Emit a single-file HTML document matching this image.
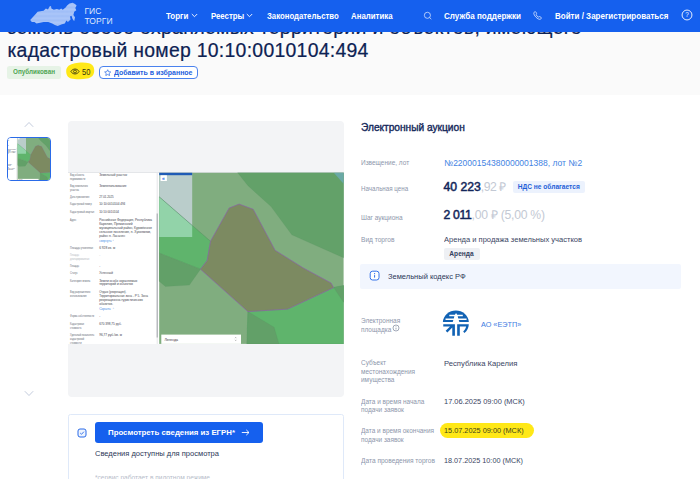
<!DOCTYPE html>
<html lang="ru"><head><meta charset="utf-8">
<title>ГИС Торги</title>
<style>
*{box-sizing:border-box;margin:0;padding:0}
html,body{width:700px;height:479px;overflow:hidden;background:#fff}
body{position:relative;font-family:"Liberation Sans",sans-serif;color:#0f2556}
.abs{position:absolute;white-space:nowrap}
#hdr{position:absolute;left:0;top:0;width:700px;height:31.5px;background:#1560ee}
.nav{position:absolute;top:11.3px;font-size:8.4px;font-weight:bold;color:#fff;line-height:10px;white-space:nowrap}
#band{position:absolute;left:0;top:31px;width:700px;height:64.2px;background:#fafafa}
.t{position:absolute;left:7.4px;font-size:19.4px;line-height:22px;color:#0d2253;white-space:nowrap;-webkit-text-stroke:.22px #0d2253}
.lbl{position:absolute;left:360.8px;font-size:7px;line-height:8.3px;color:#8d96ab;white-space:nowrap}
.val{position:absolute;left:443px;font-size:8.1px;line-height:10px;color:#3a4563;white-space:nowrap}
</style></head><body>
<div id="band"></div>
<div class="t" id="t1" style="top:16.3px;letter-spacing:.32px">земель особо охраняемых территорий и объектов, имеющего</div>
<div class="t" id="t2" style="top:38.6px;letter-spacing:.285px">кадастровый номер 10:10:0010104:494</div>
<div id="hdr"></div>
<!-- header -->
<svg class="abs" style="left:29px;top:2px" width="50" height="26" viewBox="0 0 50 26">
<defs><pattern id="dots" width="1.3" height="1.3" patternUnits="userSpaceOnUse"><rect width="1.3" height="1.3" fill="#6f9cf3"/><circle cx=".65" cy=".65" r=".55" fill="#dbe7fd"/></pattern></defs>
<path fill="url(#dots)" d="M1.2 18.1 L4.4 14.5 L6.7 12.1 L8.6 9.8 L11.4 9.3 L14.6 8.7 L16.9 6.6 L19.0 7.4 L20.5 4.6 L22.0 4.0 L22.4 6.6 L24.8 7.7 L27.9 7.1 L30.3 7.7 L32.2 6.6 L33.7 7.7 L36.6 5.5 L38.1 3.5 L40.5 1.5 L43.6 0.8 L46.0 1.9 L47.6 3.5 L46.3 5.9 L47.3 8.2 L45.2 9.8 L44.4 12.9 L46.0 15.3 L45.2 19.2 L43.6 16.9 L42.5 13.7 L41.0 14.5 L41.6 17.6 L38.9 20.0 L37.4 18.4 L35.8 21.6 L32.2 22.4 L28.7 23.9 L25.9 23.1 L23.2 21.6 L19.3 20.0 L14.6 20.0 L11.1 20.8 L7.5 21.6 L5.5 20.0 L2.8 20.0 Z"/>
</svg>
<div class="abs" id="g1" style="left:84.4px;top:7.3px;font-size:8.5px;line-height:9.3px;color:#dfe9fd;letter-spacing:.1px"><span id="g1a">ГИС</span><br><span id="g1b">ТОРГИ</span></div>
<div class="nav" id="n1" style="left:166px;transform-origin:0 0;transform:scaleX(0.9502)">Торги</div>
<svg class="abs" style="left:190.5px;top:12.8px" width="7" height="5" viewBox="0 0 7 5"><path d="M.8 1 L3.5 3.7 L6.2 1" fill="none" stroke="#fff" stroke-width=".9"/></svg>
<div class="nav" id="n2" style="left:210.5px;transform-origin:0 0;transform:scaleX(0.9291)">Реестры</div>
<svg class="abs" style="left:246px;top:12.8px" width="7" height="5" viewBox="0 0 7 5"><path d="M.8 1 L3.5 3.7 L6.2 1" fill="none" stroke="#fff" stroke-width=".9"/></svg>
<div class="nav" id="n3" style="left:266.6px;transform-origin:0 0;transform:scaleX(0.9278)">Законодательство</div>
<div class="nav" id="n4" style="left:351px;transform-origin:0 0;transform:scaleX(0.9381)">Аналитика</div>
<svg class="abs" style="left:423px;top:11px" width="10" height="10" viewBox="0 0 10 10"><circle cx="4.4" cy="4.3" r="3.05" fill="none" stroke="#d3e1fc" stroke-width=".8"/><path d="M6.6 6.5 L8.3 8.2" stroke="#d3e1fc" stroke-width=".8"/></svg>
<div class="nav" id="n5" style="left:444px;transform-origin:0 0;transform:scaleX(0.9653)">Служба поддержки</div>
<svg class="abs" style="left:533px;top:11px" width="9" height="9" viewBox="0 0 9 9"><path d="M1.2 1.2 C1.8.5 2.6.5 3 1.2 L3.6 2.5 C3.8 3 3.5 3.4 3.1 3.7 C3.6 4.8 4.4 5.6 5.4 6.1 C5.7 5.6 6.2 5.4 6.7 5.6 L7.9 6.2 C8.5 6.6 8.5 7.3 7.9 7.9 C7 8.7 5.6 8.3 4 7.1 C2.5 5.9 1.2 4.2 .9 2.9 C.7 2.2 .8 1.6 1.2 1.2 Z" fill="none" stroke="#dfe9fd" stroke-width=".8"/></svg>
<div class="nav" id="n6" style="left:554.6px;transform-origin:0 0;transform:scaleX(0.9561)">Войти / Зарегистрироваться</div>
<svg class="abs" style="left:681.4px;top:8.6px" width="12" height="12" viewBox="0 0 12 12"><circle cx="6" cy="6" r="4.95" fill="none" stroke="#e6eefe" stroke-width="1"/><text x="6" y="8.2" font-size="6.4" fill="#fff" text-anchor="middle" font-family="Liberation Sans, sans-serif">?</text></svg>

<!-- badges -->
<div class="abs" style="left:6.8px;top:66px;width:54.7px;height:12.5px;background:#e6f3e6;border-radius:2.5px"></div>
<div class="abs" id="pub" style="left:13px;top:67.3px;font-size:6.7px;font-weight:bold;color:#4fa554;line-height:10px;transform-origin:0 0;transform:scaleX(0.9455)">Опубликован</div>
<svg class="abs" style="left:65px;top:61px" width="32" height="20" viewBox="0 0 32 20"><path d="M1.2 10.5 C1 5.5 5 3 10 2.2 C14 1.4 20 1.2 24 2.2 C28 3.2 29.4 6.5 29.2 10 C29 14 27 16.6 22 17.6 C17 18.4 10 18.4 6 17.4 C2.5 16.4 1.3 13.8 1.2 10.5 Z" fill="#ffe817"/>
<path d="M5.9 10.5 C7.8 7.2 12.2 7.2 14.1 10.5 C12.2 13.8 7.8 13.8 5.9 10.5 Z" fill="none" stroke="#34340f" stroke-width=".85"/><circle cx="10" cy="10.5" r="1.45" fill="none" stroke="#34340f" stroke-width=".8"/></svg>
<div class="abs" id="n50" style="left:81.8px;top:67.4px;font-size:8.4px;line-height:10px;color:#34340f;transform-origin:0 0;transform:scaleX(0.9005)">50</div>
<div class="abs" style="left:98.9px;top:65.6px;width:99px;height:13.2px;border:1px solid #4a82ee;border-radius:4px;background:#fff"></div>
<svg class="abs" style="left:103.7px;top:68.6px" width="7.4" height="7.4" viewBox="0 0 7 7"><path d="M3.5 .7 L4.4 2.6 L6.4 2.8 L4.9 4.2 L5.3 6.2 L3.5 5.2 L1.7 6.2 L2.1 4.2 L.6 2.8 L2.6 2.6 Z" fill="none" stroke="#2f6ee6" stroke-width=".7" stroke-linejoin="round"/></svg>
<div class="abs" id="fav" style="left:114.2px;top:67.6px;font-size:7.6px;font-weight:bold;line-height:10px;color:#2460dc;transform-origin:0 0;transform:scaleX(0.9180)">Добавить в избранное</div>

<!-- gallery -->
<svg class="abs" style="left:24px;top:121px" width="10" height="7" viewBox="0 0 10 7"><path d="M.8 5.8 L5 1.5 L9.2 5.8" fill="none" stroke="#bcc5d8" stroke-width=".9"/></svg>
<svg class="abs" style="left:24px;top:390px" width="10" height="7" viewBox="0 0 10 7"><path d="M.8 1.2 L5 5.5 L9.2 1.2" fill="none" stroke="#bcc5d8" stroke-width=".9"/></svg>
<div class="abs" id="thumb" style="left:6.7px;top:136.7px;width:44px;height:44.3px;border:1px solid #2a6be8;border-radius:4px;overflow:hidden;background:#fff">
<svg style="position:absolute;left:-13.9px;top:-1px" width="71.1" height="44.3" viewBox="68 172 276 172" preserveAspectRatio="none"><use href="#shot"/></svg>
</div>
<div class="abs" style="left:67.5px;top:120.5px;width:276.5px;height:276px;background:#f3f4f6;border-radius:4px"></div>
<svg class="abs" style="left:68px;top:172px" width="276" height="172" viewBox="68 172 276 172">
<g id="shot">
<rect x="68" y="172" width="276" height="172" fill="#fff"/>
<g id="map">
<rect x="159.2" y="172.6" width="184.4" height="171.3" fill="#80ad7f"/>
<polygon points="237.5,172.6 248,185.7 271,206.6 291.8,234.8 343.6,257.8 343.6,172.6" fill="#63a169" stroke="#4f8a5c" stroke-width=".25" stroke-opacity=".6"/>
<polygon points="333.6,172.6 343.6,183.7 343.6,172.6" fill="#6aa9a6"/>
<polygon points="159.2,196.8 210.3,241.1 207.2,260.4 200.5,269.2 159.2,253.1" fill="#5fb46c" stroke="#4f8a5c" stroke-width=".25" stroke-opacity=".6"/>
<polygon points="159.2,253.1 200.5,269.2 189.4,285.1 165.4,286.5 159.2,281.3" fill="#62a068" stroke="#4f8a5c" stroke-width=".25" stroke-opacity=".6"/>
<polygon points="247.9,311.6 287.7,309.1 333.6,287.6 343.6,285.5 343.6,343.9 246.9,343.9" fill="#5fb46c" stroke="#4f8a5c" stroke-width=".25" stroke-opacity=".6"/>
<polygon points="247.9,311.6 274.1,327.2 278.9,343.9 246.9,343.9" fill="#62a068" stroke="#4f8a5c" stroke-width=".25" stroke-opacity=".6"/>
<polygon points="333.6,287.3 343.6,285.5 343.6,302.2" fill="#62a068" stroke="#4f8a5c" stroke-width=".25" stroke-opacity=".6"/>
<path d="M159.2 196.8 L210.3 241.1" stroke="#5d8a66" stroke-width=".35" fill="none"/>
<polygon points="229.1,208.1 239.1,204.1 253.2,209.3 275.1,250.3 303.3,268 331.1,283 333.6,287.6 287.7,309.1 247.9,311.6 200.5,269.2 207.2,260.4 210.6,241.1" fill="#7c8a61" stroke="#8a63a8" stroke-width=".7" stroke-linejoin="round"/>
<polygon points="159.2,172.6 192.2,172.6 192.2,225.4 159.2,196.8" fill="#bacdcb"/><polygon points="159.2,196.8 192.2,225.4 192.2,236.9 159.2,236.9" fill="#92d3a9"/><path d="M159.2 196.8 L192.2 225.4" stroke="#54806a" stroke-width=".45" fill="none"/>
<rect x="159.2" y="172.6" width="33" height="2.6" fill="#1f5bb5"/>
<rect x="160.6" y="175.3" width="6.3" height="5.7" fill="#fff"/>
<text x="161.9" y="179.9" font-size="5" font-weight="bold" fill="#2a6be8" font-family="Liberation Sans, sans-serif">«</text>
<rect x="161.3" y="334.6" width="79.7" height="9.3" fill="#fff"/>
<text x="164.4" y="340.6" font-size="3.6" fill="#333" font-family="Liberation Sans, sans-serif">Легенда</text>
<path d="M235 338.2 L235.7 337.3 L236.4 338.2 M235 339.8 L235.7 340.7 L236.4 339.8" stroke="#555" stroke-width=".35" fill="none"/>
</g>
<g id="panel" font-family="Liberation Sans, sans-serif" font-size="3.3">
<rect x="68" y="172" width="276" height=".5" fill="#c9ccd3"/>
<rect x="156.6" y="172.6" width="1.3" height="171.4" fill="#ececee"/>
<rect x="156.6" y="213.5" width="1.3" height="124" fill="#b2b4b9"/>
<text x="70.1" font-size="2.95" y="175.7" fill="#656a75" textLength="14.0" lengthAdjust="spacingAndGlyphs">Вид объекта</text>
<text x="99.2" y="175.7" fill="#3e424c" textLength="27.8" lengthAdjust="spacingAndGlyphs">Земельный участок</text>
<text x="70.1" font-size="2.95" y="179.8" fill="#656a75" textLength="15.2" lengthAdjust="spacingAndGlyphs">недвижимости</text>
<text x="70.1" font-size="2.95" y="187.1" fill="#656a75" textLength="17.8" lengthAdjust="spacingAndGlyphs">Вид земельного</text>
<text x="99.2" y="187.1" fill="#3e424c" textLength="27.2" lengthAdjust="spacingAndGlyphs">Землепользование</text>
<text x="70.1" font-size="2.95" y="191.2" fill="#656a75" textLength="8.9" lengthAdjust="spacingAndGlyphs">участка</text>
<text x="70.1" font-size="2.95" y="197.7" fill="#656a75" textLength="19.1" lengthAdjust="spacingAndGlyphs">Дата присвоения</text>
<text x="99.2" y="197.7" fill="#3e424c" textLength="14.5" lengthAdjust="spacingAndGlyphs">27.01.2025</text>
<text x="70.1" font-size="2.95" y="205.3" fill="#656a75" textLength="21.6" lengthAdjust="spacingAndGlyphs">Кадастровый номер</text>
<text x="99.2" y="205.3" fill="#3e424c" textLength="26.1" lengthAdjust="spacingAndGlyphs">10:10:0010104:494</text>
<text x="70.1" font-size="2.95" y="212.8" fill="#656a75" textLength="24.1" lengthAdjust="spacingAndGlyphs">Кадастровый квартал</text>
<text x="99.2" y="212.8" fill="#3e424c" textLength="19.8" lengthAdjust="spacingAndGlyphs">10:10:0010104</text>
<text x="70.1" font-size="2.95" y="220.7" fill="#656a75" textLength="6.3" lengthAdjust="spacingAndGlyphs">Адрес</text>
<text x="99.2" y="220.7" fill="#3e424c" textLength="52.9" lengthAdjust="spacingAndGlyphs">Российская Федерация, Республика</text>
<text x="99.2" y="224.6" fill="#3e424c">Карелия, Пряжинский</text>
<text x="99.2" y="228.7" fill="#3e424c" textLength="52.8" lengthAdjust="spacingAndGlyphs">муниципальный район, Куркиёкское</text>
<text x="99.2" y="232.7" fill="#3e424c" textLength="51.8" lengthAdjust="spacingAndGlyphs">сельское поселение, п. Хухоямяки,</text>
<text x="99.2" y="236.8" fill="#3e424c" textLength="25.8" lengthAdjust="spacingAndGlyphs">район п. Ласанен</text>
<text x="99.2" y="241.7" fill="#3f8be6" textLength="15.8" lengthAdjust="spacingAndGlyphs">свернуть ⌃</text>
<text x="70.1" font-size="2.95" y="248.6" fill="#656a75" textLength="22.9" lengthAdjust="spacingAndGlyphs">Площадь уточненная</text>
<text x="99.2" y="248.6" fill="#3e424c" textLength="15.9" lengthAdjust="spacingAndGlyphs">6 928 кв. м</text>
<text x="70.1" font-size="2.95" y="255.7" fill="#b4b8c0" textLength="8.9" lengthAdjust="spacingAndGlyphs">Площадь</text>
<text x="99.2" y="255.7" fill="#b4b8c0">-</text>
<text x="70.1" font-size="2.95" y="259.5" fill="#b4b8c0" textLength="19.1" lengthAdjust="spacingAndGlyphs">декларированная</text>
<text x="70.1" font-size="2.95" y="267.1" fill="#656a75" textLength="8.9" lengthAdjust="spacingAndGlyphs">Площадь</text>
<text x="99.2" y="267.1" fill="#3e424c">-</text>
<text x="70.1" font-size="2.95" y="273.9" fill="#656a75" textLength="7.6" lengthAdjust="spacingAndGlyphs">Статус</text>
<text x="99.2" y="273.9" fill="#3e424c" textLength="13.8" lengthAdjust="spacingAndGlyphs">Учтенный</text>
<text x="70.1" font-size="2.95" y="281.5" fill="#656a75" textLength="20.3" lengthAdjust="spacingAndGlyphs">Категория земель</text>
<text x="99.2" y="281.5" fill="#3e424c" textLength="38.1" lengthAdjust="spacingAndGlyphs">Земли особо охраняемых</text>
<text x="99.2" y="285.3" fill="#3e424c" textLength="33.8" lengthAdjust="spacingAndGlyphs">территорий и объектов</text>
<text x="70.1" font-size="2.95" y="293.3" fill="#656a75" textLength="20.3" lengthAdjust="spacingAndGlyphs">Вид разрешенного</text>
<text x="99.2" y="293.3" fill="#3e424c" textLength="27.2" lengthAdjust="spacingAndGlyphs">Отдых (рекреация).</text>
<text x="70.1" font-size="2.95" y="297.3" fill="#656a75" textLength="16.5" lengthAdjust="spacingAndGlyphs">использования</text>
<text x="99.2" y="297.3" fill="#3e424c" textLength="48.8" lengthAdjust="spacingAndGlyphs">Территориальная зона - Р 5. Зона</text>
<text x="99.2" y="301.4" fill="#3e424c" textLength="43.6" lengthAdjust="spacingAndGlyphs">рекреационно-туристических</text>
<text x="99.2" y="305.1" fill="#3e424c" textLength="13.8" lengthAdjust="spacingAndGlyphs">объектов.</text>
<text x="99.2" y="310.3" fill="#3f8be6" textLength="15.5" lengthAdjust="spacingAndGlyphs">Скрыть ⌃</text>
<text x="70.1" font-size="2.95" y="317.1" fill="#656a75" textLength="24.1" lengthAdjust="spacingAndGlyphs">Форма собственности</text>
<text x="99.2" y="317.1" fill="#3e424c">-</text>
<text x="70.1" font-size="2.95" y="324.7" fill="#656a75" textLength="14.0" lengthAdjust="spacingAndGlyphs">Кадастровая</text>
<text x="99.2" y="324.7" fill="#3e424c" textLength="22.4" lengthAdjust="spacingAndGlyphs">670 398,75 руб.</text>
<text x="70.1" font-size="2.95" y="329.1" fill="#656a75" textLength="11.4" lengthAdjust="spacingAndGlyphs">стоимость</text>
<text x="70.1" font-size="2.95" y="336.0" fill="#656a75" textLength="24.1" lengthAdjust="spacingAndGlyphs">Удельный показатель</text>
<text x="99.2" y="336.0" fill="#3e424c" textLength="22.8" lengthAdjust="spacingAndGlyphs">96,77 руб./кв. м</text>
<text x="70.1" font-size="2.95" y="340.1" fill="#656a75" textLength="14.0" lengthAdjust="spacingAndGlyphs">кадастровой</text>
<text x="70.1" font-size="2.95" y="344.3" fill="#656a75" textLength="11.4" lengthAdjust="spacingAndGlyphs">стоимости</text>
</g>
</g>
</svg>

<!-- egrn box -->
<div class="abs" style="left:67.5px;top:413.5px;width:276.5px;height:80px;border:1px solid #dfe9f9;border-radius:2.5px"></div>
<svg class="abs" style="left:77px;top:428px" width="10" height="10" viewBox="0 0 10 10"><rect x="1" y="1" width="8" height="8" rx="2" fill="#eef4fe" stroke="#2a6be8" stroke-width="1"/><path d="M3.2 5 L4.5 6.3 L6.9 3.7" fill="none" stroke="#2a6be8" stroke-width=".9"/></svg>
<div class="abs" style="left:95px;top:422.3px;width:168px;height:20.7px;background:#1560ee;border-radius:3px"></div>
<div class="abs" id="btn" style="left:108px;top:427.5px;font-size:8px;font-weight:bold;line-height:10px;color:#fff;transform-origin:0 0;transform:scaleX(0.9794)">Просмотреть сведения из ЕГРН*</div>
<svg class="abs" style="left:240.5px;top:429px" width="9" height="7" viewBox="0 0 9 7"><path d="M.8 3.5 L8 3.5 M5.3 .9 L8 3.5 L5.3 6.1" fill="none" stroke="#fff" stroke-width=".9"/></svg>
<div class="abs" id="sv" style="left:95px;top:448.6px;font-size:7.9px;line-height:10px;color:#2b3758;transform-origin:0 0;transform:scaleX(0.9536)">Сведения доступны для просмотра</div>
<div class="abs" id="pil" style="left:95px;top:473.4px;font-size:7.2px;line-height:9px;color:#b7bdca;transform-origin:0 0;transform:scaleX(0.9146)">*сервис работает в пилотном режиме</div>

<!-- right column -->
<div class="abs" id="h2" style="left:360.5px;top:121.7px;font-size:10.2px;line-height:12px;color:#14285a;-webkit-text-stroke:.38px #14285a;transform-origin:0 0;transform:scaleX(0.9963)">Электронный аукцион</div>

<div class="lbl" id="l1" style="left:360.8px;top:159.04px;transform-origin:0 0;transform:scaleX(0.9247)">Извещение, лот</div>
<div class="val" id="v1" style="left:443.6px;top:157.9px;color:#4383e3;font-size:8.7px;transform-origin:0 0;transform:scaleX(0.9792)">№22000154380000001388, лот №2</div>

<div class="lbl" id="l2" style="left:360.8px;top:185.1px;transform-origin:0 0;transform:scaleX(0.8879)">Начальная цена</div>
<div class="abs" id="p1" style="left:443.5px;top:180px;font-size:12.2px;line-height:14px;color:#c3c9d4"><b id="p1b" style="color:#12265a;font-weight:normal;-webkit-text-stroke:.5px #12265a;letter-spacing:0px">40 223</b><span id="p1g" style="letter-spacing:-.42px">,92 ₽</span></div>
<div class="abs" id="nds" style="left:512.5px;top:180.7px;width:72.5px;height:12.2px;background:#ecf2fd;border-radius:2px;font-size:6.6px;font-weight:bold;line-height:12.2px;color:#1e5ed8;text-align:center">НДС не облагается</div>

<div class="lbl" id="l3" style="left:360.8px;top:213.5px;transform-origin:0 0;transform:scaleX(0.9271)">Шаг аукциона</div>
<div class="abs" id="p2" style="left:443.5px;top:208px;font-size:12.2px;line-height:14px;color:#c3c9d4"><b id="p2b" style="color:#12265a;font-weight:normal;-webkit-text-stroke:.5px #12265a;letter-spacing:-.3px">2 011</b><span id="p2g" style="letter-spacing:-.26px">,00 ₽ (5,00 %)</span></div>

<div class="lbl" id="l4" style="left:360.8px;top:236.1px;transform-origin:0 0;transform:scaleX(0.9396)">Вид торгов</div>
<div class="val" id="v2" style="left:443.6px;top:234.9px;transform-origin:0 0;transform:scaleX(0.9317)">Аренда и продажа земельных участков</div>
<div class="abs" style="left:443.5px;top:248px;width:36px;height:12px;background:#eef0f4;border-radius:2px;font-size:6.6px;font-weight:bold;line-height:12.6px;color:#333e5e;text-align:center">Аренда</div>

<div class="abs" style="left:360px;top:264px;width:320.7px;height:24.8px;background:#f2f6fe;border-radius:2px"></div>
<svg class="abs" style="left:368.6px;top:270px" width="11" height="11" viewBox="0 0 11 11"><rect x="1.2" y="1.2" width="8.8" height="8.8" rx="2.4" fill="#fff" stroke="#2a6be8" stroke-width=".95"/><path d="M5.6 5.1 L5.6 7.6" stroke="#2a6be8" stroke-width="1"/><circle cx="5.6" cy="3.7" r=".6" fill="#2a6be8"/></svg>
<div class="abs" id="zk" style="left:388px;top:271.5px;font-size:7.8px;line-height:10px;color:#2b3758;transform-origin:0 0;transform:scaleX(0.9630)">Земельный кодекс РФ</div>

<div class="lbl" id="l5" style="line-height:9.2px;top:315.7px;transform-origin:0 0;transform:scaleX(.925)">Электронная<br>площадка</div>
<svg class="abs" style="left:391.6px;top:323.8px" width="8" height="8" viewBox="0 0 8 8"><circle cx="4" cy="4" r="3" fill="none" stroke="#66708a" stroke-width=".6"/><path d="M4 3.7 L4 5.5" stroke="#66708a" stroke-width=".6"/><circle cx="4" cy="2.7" r=".35" fill="#66708a"/></svg>
<svg class="abs" id="logo" style="left:438px;top:305px" width="36" height="36" viewBox="0 0 479 479">
<g fill="#1162b4">
<path d="M65 225 A173 165 0 0 1 410 225 Z"/>
<path d="M70 255 H225 V410 H190 V300 L125 365 L102 342 L160 285 H70 Z"/>
<path d="M255 255 H410 C408 300 390 340 352 372 L335 352 C358 330 370 310 374 285 H290 V410 H255 Z"/>
</g>
<g fill="#fff">
<path d="M150 130 H225 L240 105 L255 130 H330 V150 H262 L270 180 H380 V200 H276 L284 225 H196 L204 200 H100 V180 H210 L218 150 H150 Z"/>
</g>
</svg>
<div class="abs" id="eetp" style="left:481.2px;top:320px;font-size:7.6px;line-height:10px;color:#3b7be2;transform-origin:0 0;transform:scaleX(0.9575)">АО «ЕЭТП»</div>

<div class="lbl" id="l6" style="top:359.3px;transform-origin:0 0;transform:scaleX(.925)">Субъект<br>местонахождения<br>имущества</div>
<div class="val" id="v3" style="left:443.5px;top:358.9px;transform-origin:0 0;transform:scaleX(0.9461)">Республика Карелия</div>

<div class="lbl" id="l7" style="top:397.8px;transform-origin:0 0;transform:scaleX(.925)">Дата и время начала<br>подачи заявок</div>
<div class="val" id="v4" style="left:443.6px;top:396.7px;transform-origin:0 0;transform:scaleX(0.9175)">17.06.2025 09:00 (МСК)</div>

<div class="abs" style="left:439.8px;top:422.6px;width:94.4px;height:15.1px;background:#ffe817;border-radius:7.5px"></div>
<div class="lbl" id="l8" style="left:360.8px;top:427.4px;transform-origin:0 0;transform:scaleX(0.9210)">Дата и время окончания<br>подачи заявок</div>
<div class="val" id="v5" style="color:#3d431c;left:443.6px;top:426.4px;transform-origin:0 0;transform:scaleX(0.9050)">15.07.2025 09:00 (МСК)</div>

<div class="lbl" id="l9" style="left:360.8px;top:457.1px;transform-origin:0 0;transform:scaleX(0.9388)">Дата проведения торгов</div>
<div class="val" id="v6" style="left:443.6px;top:456.3px;transform-origin:0 0;transform:scaleX(0.8959)">18.07.2025 10:00 (МСК)</div>
</body></html>
